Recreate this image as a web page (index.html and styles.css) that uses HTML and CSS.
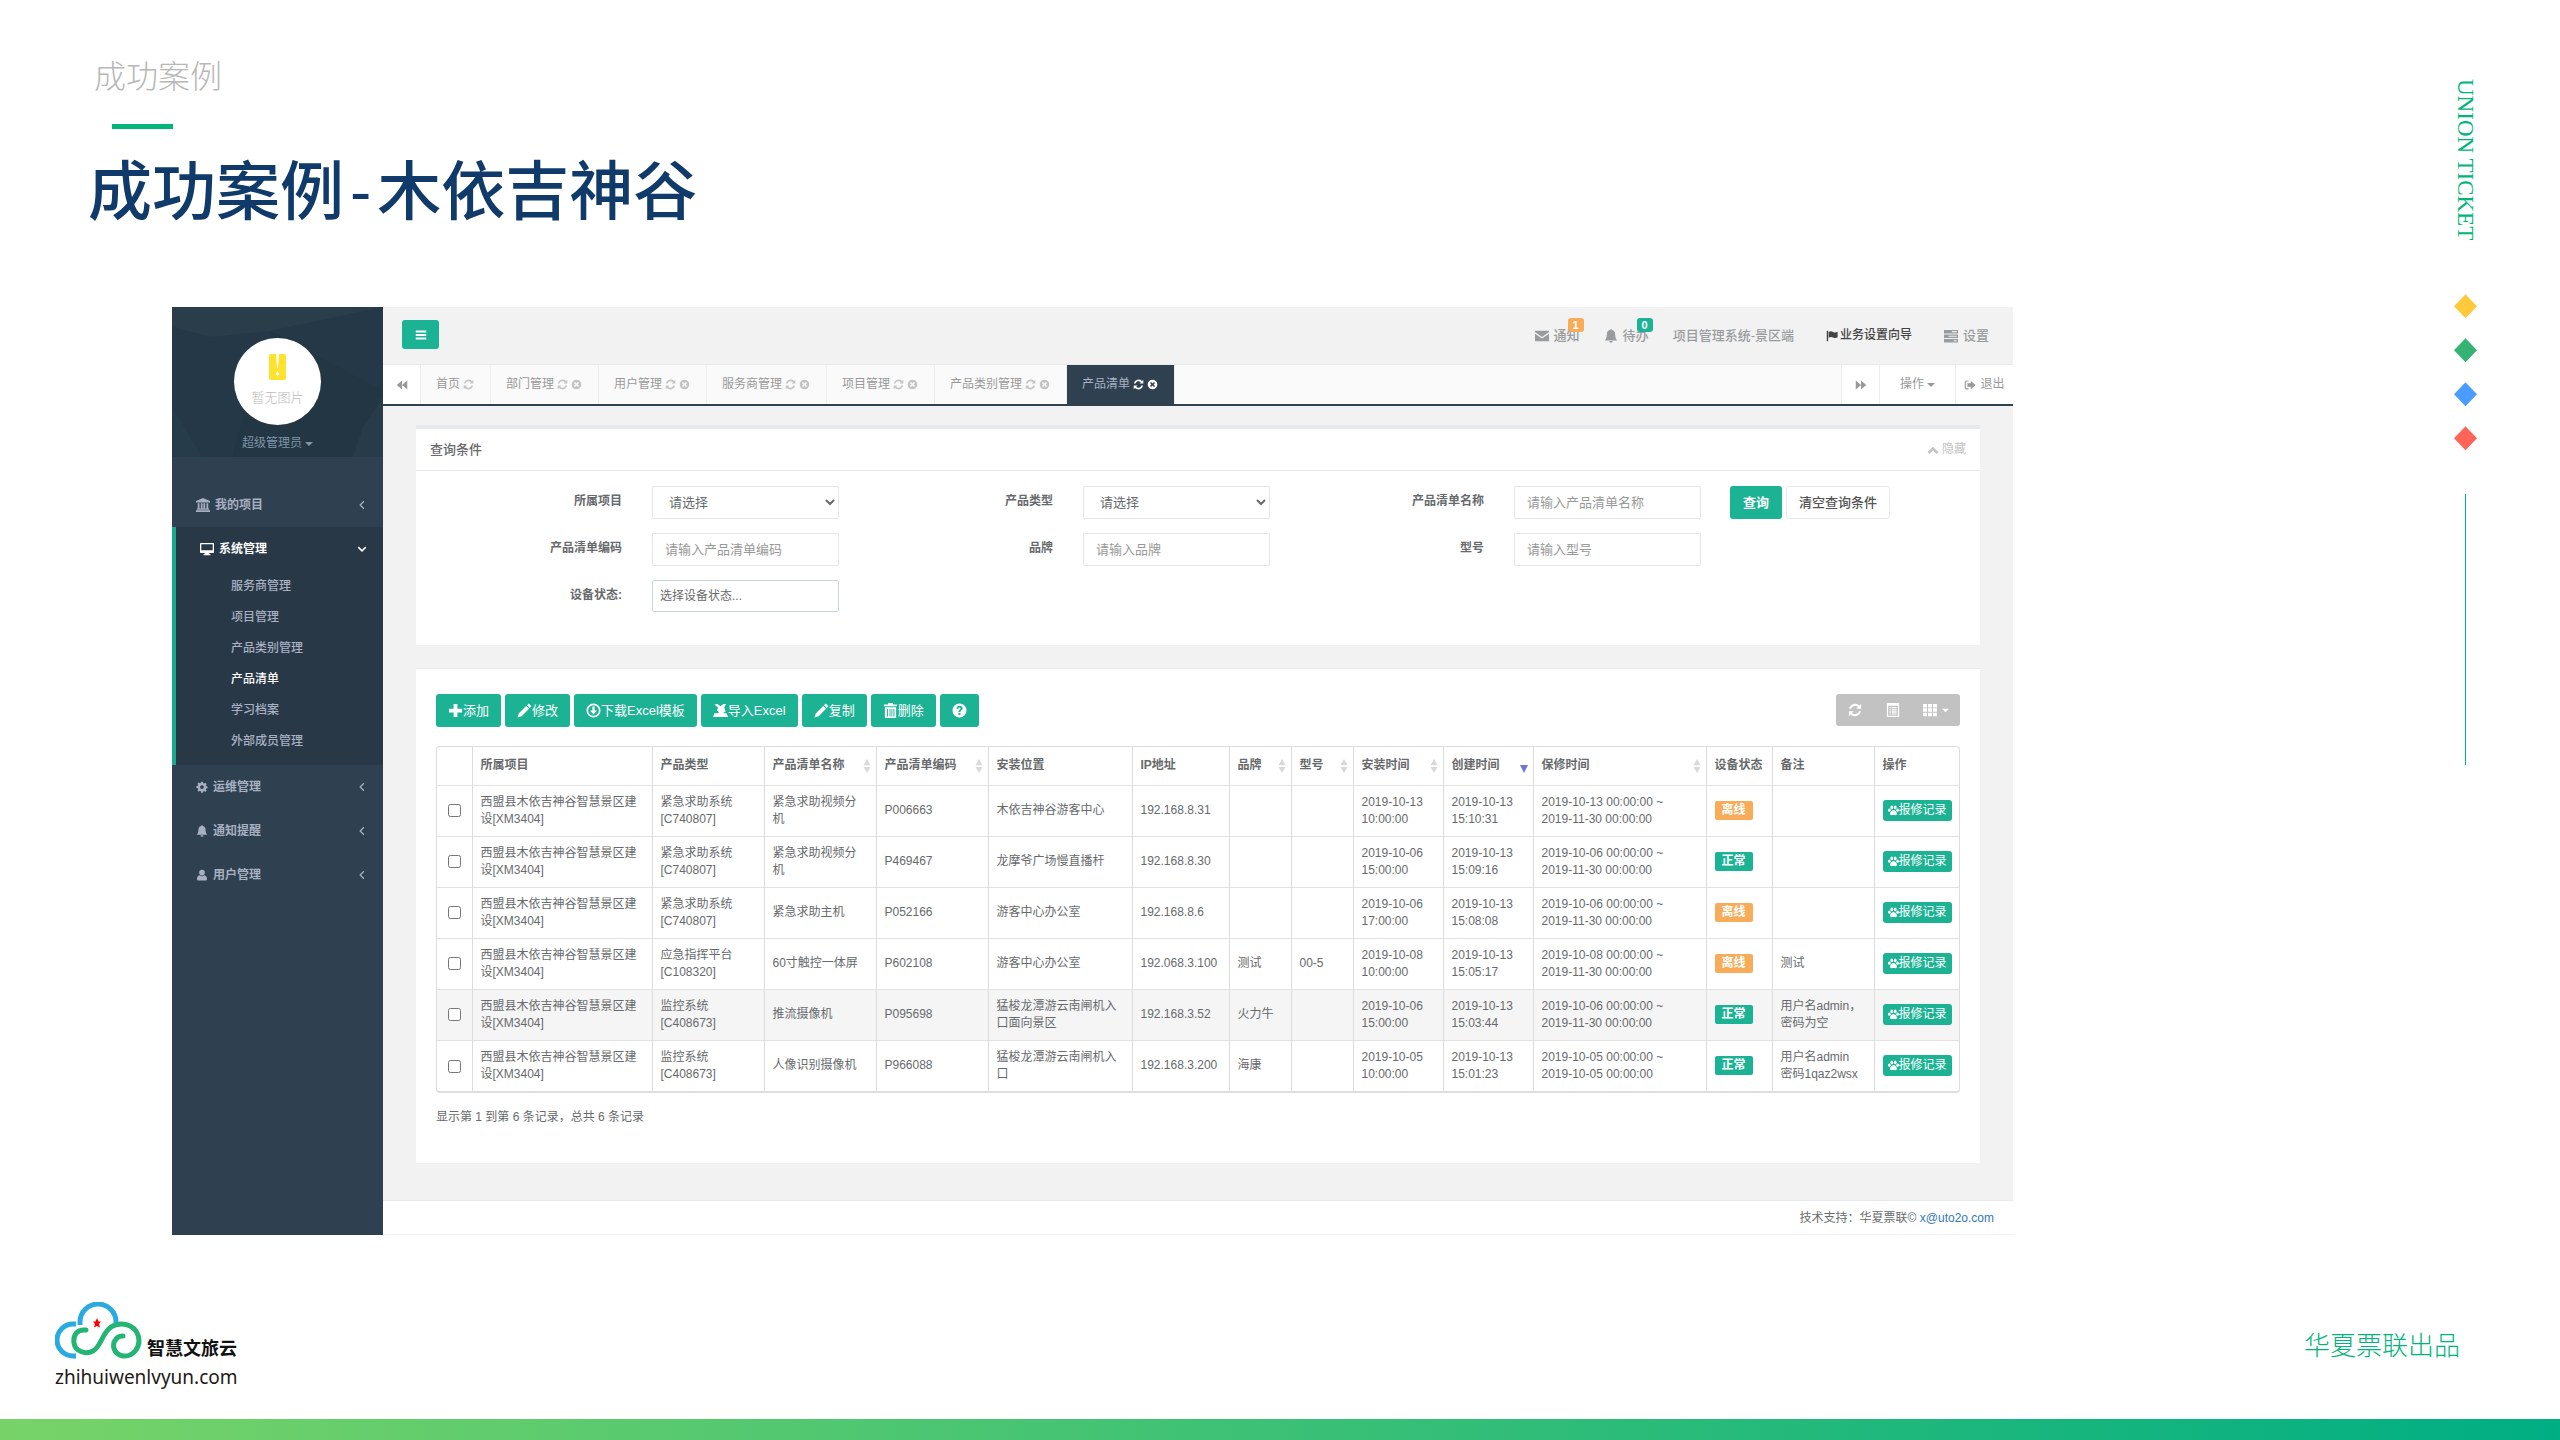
FILE: index.html
```html
<!DOCTYPE html>
<html lang="zh-CN">
<head>
<meta charset="utf-8">
<title>成功案例-木依吉神谷</title>
<link rel="stylesheet" href="styles.css">
</head>
<body>
<svg class="sprite" aria-hidden="true">
  <symbol id="bars" viewBox="0 0 16 16"><path d="M1 2h14v2.6H1zM1 6.7h14v2.6H1zM1 11.4h14V14H1z"/></symbol>
  <symbol id="backward" viewBox="0 0 16 16"><path d="M8 2v12L1 8zM15 2v12L8 8z"/></symbol>
  <symbol id="forward" viewBox="0 0 16 16"><path d="M8 2v12l7-6zM1 2v12l7-6z"/></symbol>
  <symbol id="refresh" viewBox="0 0 16 16"><path d="M15 1v5.6H9.4l2-2A4.8 4.8 0 0 0 3.600 6.500H1.200A7.100 7.100 0 0 1 13.100 2.900zM1 15V9.400h5.600l-2 2a4.800 4.800 0 0 0 7.800-1.900h2.400A7.100 7.100 0 0 1 2.900 13.100z"/></symbol>
  <symbol id="times" viewBox="0 0 16 16"><path fill-rule="evenodd" d="M8 1a7 7 0 1 1 0 14A7 7 0 0 1 8 1zM5.900 4.300L4.300 5.900 6.400 8l-2.100 2.100 1.600 1.600L8 9.600l2.100 2.100 1.600-1.600L9.600 8l2.100-2.100-1.600-1.600L8 6.400z"/></symbol>
  <symbol id="bank" viewBox="0 0 16 16"><path d="M8 0l8 3.500V5H0V3.500zM2 6h2v6h1.500V6h2v6h1V6h2v6H12V6h2v6h1v1.300H1V12h1zM0 14h16v2H0z"/></symbol>
  <symbol id="desktop" viewBox="0 0 16 16"><path fill-rule="evenodd" d="M1 1h14a1 1 0 0 1 1 1v9.500a1 1 0 0 1-1 1h-4.500l.5 1.500h1v1H4v-1h1l.5-1.500H1a1 1 0 0 1-1-1V2a1 1 0 0 1 1-1zm.5 1.500v7h13v-7z"/></symbol>
  <symbol id="cog" viewBox="0 0 16 16"><path fill-rule="evenodd" d="M6.800 1h2.400l.4 1.900 1.200.5 1.600-1.100 1.700 1.700L13 5.600l.5 1.200 1.900.4v2.400l-1.900.4-.5 1.200 1.100 1.600-1.700 1.700-1.600-1.100-1.200.5L9.200 15.500H6.800l-.4-1.900-1.200-.5-1.600 1.100-1.700-1.700L3 10.900l-.5-1.200L.6 9.200V6.800l1.900-.4L3 5.200 1.900 3.600l1.700-1.700L5.200 3l1.200-.5zM8 5.500a2.600 2.600 0 1 0 0 5.200 2.600 2.600 0 0 0 0-5.200z"/></symbol>
  <symbol id="bell" viewBox="0 0 16 16"><path d="M8 0c.7 0 1 .5 1 1.200 2.600.5 3.800 2.500 3.800 5 0 3.300.8 5 2.200 6.800H1c1.400-1.800 2.200-3.500 2.200-6.800 0-2.500 1.200-4.500 3.800-5C7 .5 7.300 0 8 0zM6 13.800h4a2 2 0 0 1-4 0z"/></symbol>
  <symbol id="user" viewBox="0 0 16 16"><path d="M8 1a3.700 3.700 0 1 1 0 7.600A3.700 3.700 0 0 1 8 1zM5 8.300a4.800 4.800 0 0 0 6 0c2.700.2 3.700 2.500 3.700 5 0 1.200-.8 2-2 2H3.300c-1.200 0-2-.8-2-2 0-2.500 1-4.800 3.700-5z"/></symbol>
  <symbol id="left" viewBox="0 0 16 16"><path d="M11 2L5 8l6 6" fill="none" stroke="currentColor" stroke-width="2"/></symbol>
  <symbol id="down" viewBox="0 0 16 16"><path d="M2 5l6 6 6-6" fill="none" stroke="currentColor" stroke-width="2.500"/></symbol>
  <symbol id="up" viewBox="0 0 16 16"><path d="M2 12l6-6 6 6" fill="none" stroke="currentColor" stroke-width="3.500"/></symbol>
  <symbol id="envelope" viewBox="0 0 16 16"><path d="M0 2h16v1.500L8 9 0 3.500zM0 5.500l8 5.300 8-5.300V14H0z"/></symbol>
  <symbol id="flag" viewBox="0 0 16 16"><path d="M1 1h1.800v14H1zM3.500 2.500c2-1.300 4-1.300 6 0s4 .8 6-.3v7.600c-2 1.200-4 1.400-6 .2s-4-.9-6 .3z"/></symbol>
  <symbol id="tasks" viewBox="0 0 16 16"><path fill-rule="evenodd" d="M0 1h16v4H0zM0 6.200h16v4H0zM0 11.400h16v4H0zM9 2.400v1.200h5.500V2.400zM5 7.600v1.200h9.500V7.600zM11 12.800V14h3.500v-1.200z"/></symbol>
  <symbol id="signout" viewBox="0 0 16 16"><path d="M6 2H3.500A2.500 2.500 0 0 0 1 4.500v7A2.500 2.500 0 0 0 3.500 14H6v-1.600H3.500a1 1 0 0 1-1-1v-7a1 1 0 0 1 1-1H6zM9 2.500L15.500 8 9 13.500v-3.300H4.500V5.800H9z"/></symbol>
  <symbol id="plus" viewBox="0 0 16 16"><path d="M6 1h4v5h5v4h-5v5H6v-5H1V6h5z"/></symbol>
  <symbol id="pencil" viewBox="0 0 16 16"><path d="M12.500.5l3 3-1.800 1.800-3-3zM9.800 3.200l3 3L5 14l-4.500 1.500L2 11z"/></symbol>
  <symbol id="download" viewBox="0 0 16 16"><path fill-rule="evenodd" d="M8 .5a7.500 7.500 0 1 1 0 15 7.500 7.500 0 0 1 0-15zm0 1.800a5.700 5.700 0 1 0 0 11.400A5.700 5.700 0 0 0 8 2.300zM6.800 3.800h2.400V8h2.600L8 12.300 4.200 8h2.600z"/></symbol>
  <symbol id="import" viewBox="0 0 16 16"><path d="M1.500 1.500L5 1l3 2.500L11 1h3l-2 3.500L13.500 9 11 10.500l1 .5h2.500L16 15H0l1.500-4H5l1.500-1L4 7.500l1.500-2.500z"/></symbol>
  <symbol id="trash" viewBox="0 0 16 16"><path fill-rule="evenodd" d="M5.500 0h5v1.500H15v2H1v-2h4.500zM2 4.500h12V16H2zm2.300 1.800v8h1v-8zm2.700 0v8h.9v-8zm2 0v8h.9v-8zm2.100 0v8h1v-8z"/></symbol>
  <symbol id="question" viewBox="0 0 16 16"><path fill-rule="evenodd" d="M8 .5a7.500 7.500 0 1 1 0 15 7.500 7.500 0 0 1 0-15zM4.800 6.200h2.100c0-1 .4-1.400 1.100-1.400s1.100.4 1.100 1c0 1.200-2.200 1.300-2.200 3.700h2c0-1.500 2.500-1.700 2.500-3.900C11.400 4 10 3 8 3S4.800 4.200 4.800 6.200zM6.900 10.600v2.200H9v-2.200z"/></symbol>
  <symbol id="list" viewBox="0 0 16 16"><path fill-rule="evenodd" d="M1 0h14v16H1zm1.500 3v11.500h11V3zM4 4.500h1.500V6H4zm2.500 0H12V6H6.500zM4 7h1.500v1.500H4zm2.500 0H12v1.500H6.500zM4 9.500h1.500V11H4zm2.500 0H12V11H6.500zM4 12h1.500v1.200H4zm2.500 0H12v1.200H6.500z"/></symbol>
  <symbol id="th" viewBox="0 0 16 16"><path d="M0 1h4.600v4H0zM5.700 1h4.600v4H5.700zM11.400 1H16v4h-4.600zM0 6h4.600v4H0zM5.700 6h4.600v4H5.700zM11.400 6H16v4h-4.600zM0 11h4.600v4H0zM5.700 11h4.600v4H5.700zM11.400 11H16v4h-4.600z"/></symbol>
  <symbol id="paw" viewBox="0 0 16 16"><ellipse cx="5.500" cy="3.600" rx="2" ry="2.700"/><ellipse cx="10.500" cy="3.600" rx="2" ry="2.700"/><ellipse cx="2" cy="7.500" rx="1.900" ry="2.400"/><ellipse cx="14" cy="7.500" rx="1.900" ry="2.400"/><path d="M8 7.300c2.700 0 5 3.400 5 5.600 0 2.700-3 1.700-5 1.700s-5 1-5-1.700c0-2.200 2.300-5.600 5-5.600z"/></symbol>
  <symbol id="caret" viewBox="0 0 16 16"><path d="M0 4h16l-8 8z"/></symbol>
  <symbol id="sort" viewBox="0 0 8 16"><path d="M4 0l4 7H0zM4 16l4-7H0z"/></symbol>
  <symbol id="desc" viewBox="0 0 8 8"><path d="M0 0h8L4 8z"/></symbol>
</svg>

<div class="slide">
  <div class="stage">
    <header class="heading">
      <p class="eyebrow">成功案例</p>
      <span class="dash"></span>
      <h1>成功案例<span class="hyphen">-</span>木依吉神谷</h1>
    </header>

    <div class="app">
      <aside class="sidebar">
        <div class="profile">
          <svg class="facets" viewBox="0 0 211 150" preserveAspectRatio="none" aria-hidden="true">
            <path fill="#293d4b" d="M0 0h211L98 24 40 30 0 20z"/><path fill="#22343f" fill-opacity=".5" d="M98 24l113 60v66H60z"/><path fill="#2a404f" fill-opacity=".6" d="M211 90v60h-30l10-30z"/><path fill="#27404f" fill-opacity=".5" d="M0 100l30 50H0z"/>
          </svg>
          <div class="avatar">
            <svg class="avatar-mark" viewBox="0 0 17 26" aria-hidden="true"><rect width="17" height="26" rx="2" fill="#ffe22e"/><path d="M7 0h3l-1 14H8z" fill="#fff"/><path d="M8.500 17l1.700 3-1.700 2.500L6.800 20z" fill="#fff"/></svg>
            <span>暂无图片</span>
          </div>
          <button class="profile-name" type="button">超级管理员<svg class="ic caret"><use href="#caret"/></svg></button>
        </div>
        <nav class="menu">
          <a class="item" href="#"><svg class="ic wide"><use href="#bank"/></svg>我的项目<svg class="ic chev"><use href="#left"/></svg></a>
          <div class="group">
            <a class="item on" href="#"><svg class="ic wide"><use href="#desktop"/></svg>系统管理<svg class="ic chev"><use href="#down"/></svg></a>
            <a class="sub" href="#">服务商管理</a>
            <a class="sub" href="#">项目管理</a>
            <a class="sub" href="#">产品类别管理</a>
            <a class="sub on" href="#">产品清单</a>
            <a class="sub" href="#">学习档案</a>
            <a class="sub" href="#">外部成员管理</a>
          </div>
          <a class="item" href="#"><svg class="ic"><use href="#cog"/></svg>运维管理<svg class="ic chev"><use href="#left"/></svg></a>
          <a class="item" href="#"><svg class="ic"><use href="#bell"/></svg>通知提醒<svg class="ic chev"><use href="#left"/></svg></a>
          <a class="item" href="#"><svg class="ic"><use href="#user"/></svg>用户管理<svg class="ic chev"><use href="#left"/></svg></a>
        </nav>
      </aside>

      <div class="page">
        <div class="topbar">
          <button class="toggle" type="button" aria-label="菜单"><svg class="ic"><use href="#bars"/></svg></button>
          <div class="links">
            <a class="badged" href="#"><svg class="ic wide"><use href="#envelope"/></svg>通知<b class="count warn">1</b></a>
            <a class="badged" href="#"><svg class="ic wide"><use href="#bell"/></svg>待办<b class="count">0</b></a>
            <a class="system" href="#">项目管理系统-景区端</a>
            <a class="guide" href="#"><svg class="ic"><use href="#flag"/></svg>业务设置向导</a>
            <a href="#"><svg class="ic wide"><use href="#tasks"/></svg>设置</a>
          </div>
        </div>

        <div class="tabs">
          <button class="edge" type="button" aria-label="向左"><svg class="ic"><use href="#backward"/></svg></button>
          <a class="tab" href="#">首页<svg class="ic"><use href="#refresh"/></svg></a>
          <a class="tab" href="#">部门管理<svg class="ic"><use href="#refresh"/></svg><svg class="ic"><use href="#times"/></svg></a>
          <a class="tab" href="#">用户管理<svg class="ic"><use href="#refresh"/></svg><svg class="ic"><use href="#times"/></svg></a>
          <a class="tab" href="#">服务商管理<svg class="ic"><use href="#refresh"/></svg><svg class="ic"><use href="#times"/></svg></a>
          <a class="tab" href="#">项目管理<svg class="ic"><use href="#refresh"/></svg><svg class="ic"><use href="#times"/></svg></a>
          <a class="tab" href="#">产品类别管理<svg class="ic"><use href="#refresh"/></svg><svg class="ic"><use href="#times"/></svg></a>
          <a class="tab on" href="#">产品清单<svg class="ic"><use href="#refresh"/></svg><svg class="ic"><use href="#times"/></svg></a>
          <button class="edge right" type="button" aria-label="向右"><svg class="ic"><use href="#forward"/></svg></button>
          <button class="edge ops" type="button">操作<svg class="ic caret"><use href="#caret"/></svg></button>
          <a class="edge exit" href="#"><svg class="ic"><use href="#signout"/></svg>退出</a>
        </div>

        <div class="content">
          <section class="panel filter">
            <div class="panel-head">
              <h2>查询条件</h2>
              <a class="hide" href="#"><svg class="ic"><use href="#up"/></svg>隐藏</a>
            </div>
            <form class="fields">
              <div class="field"><label for="f1">所属项目</label><select id="f1"><option>请选择</option></select></div>
              <div class="field"><label for="f2">产品类型</label><select id="f2"><option>请选择</option></select></div>
              <div class="field"><label for="f3">产品清单名称</label><input id="f3" type="text" placeholder="请输入产品清单名称"></div>
              <div class="actions"><button class="btn strong" type="button">查询</button><button class="btn plain" type="button">清空查询条件</button></div>
              <div class="field"><label for="f4">产品清单编码</label><input id="f4" type="text" placeholder="请输入产品清单编码"></div>
              <div class="field"><label for="f5">品牌</label><input id="f5" type="text" placeholder="请输入品牌"></div>
              <div class="field"><label for="f6">型号</label><input id="f6" type="text" placeholder="请输入型号"></div>
              <div class="field first"><label for="f7">设备状态:</label><input id="f7" class="chosen" type="text" placeholder="选择设备状态..."></div>
            </form>
          </section>

          <section class="panel list">
            <div class="toolbar">
              <button class="btn" type="button"><svg class="ic"><use href="#plus"/></svg>添加</button>
              <button class="btn" type="button"><svg class="ic"><use href="#pencil"/></svg>修改</button>
              <button class="btn" type="button"><svg class="ic"><use href="#download"/></svg>下载Excel模板</button>
              <button class="btn" type="button"><svg class="ic"><use href="#import"/></svg>导入Excel</button>
              <button class="btn" type="button"><svg class="ic"><use href="#pencil"/></svg>复制</button>
              <button class="btn" type="button"><svg class="ic"><use href="#trash"/></svg>删除</button>
              <button class="btn" type="button" aria-label="帮助"><svg class="ic"><use href="#question"/></svg></button>
              <div class="views">
                <button type="button" aria-label="刷新"><svg class="ic"><use href="#refresh"/></svg></button>
                <button type="button" aria-label="切换"><svg class="ic"><use href="#list"/></svg></button>
                <button type="button" aria-label="列"><svg class="ic"><use href="#th"/></svg><svg class="ic caret"><use href="#caret"/></svg></button>
              </div>
            </div>
            <div class="table-box">
            <table>
              <colgroup><col class="w35"><col class="w180"><col class="w112"><col class="w112"><col class="w112"><col class="w144"><col class="w97"><col class="w62"><col class="w62"><col class="w90"><col class="w90"><col class="w173"><col class="w66"><col class="w102"><col class="w85"></colgroup>
              <thead><tr>
                <th></th><th>所属项目</th><th>产品类型</th>
                <th><span class="th">产品清单名称<svg class="sort"><use href="#sort"/></svg></span></th>
                <th><span class="th">产品清单编码<svg class="sort"><use href="#sort"/></svg></span></th>
                <th>安装位置</th><th>IP地址</th>
                <th><span class="th">品牌<svg class="sort"><use href="#sort"/></svg></span></th>
                <th><span class="th">型号<svg class="sort"><use href="#sort"/></svg></span></th>
                <th><span class="th">安装时间<svg class="sort"><use href="#sort"/></svg></span></th>
                <th><span class="th">创建时间<svg class="desc"><use href="#desc"/></svg></span></th>
                <th><span class="th">保修时间<svg class="sort"><use href="#sort"/></svg></span></th>
                <th>设备状态</th><th>备注</th><th>操作</th>
              </tr></thead>
              <tbody>
                <tr><td><input type="checkbox" aria-label="选择"></td><td>西盟县木依吉神谷智慧景区建设[XM3404]</td><td>紧急求助系统[C740807]</td><td>紧急求助视频分机</td><td>P006663</td><td>木依吉神谷游客中心</td><td>192.168.8.31</td><td></td><td></td><td>2019-10-13 10:00:00</td><td>2019-10-13 15:10:31</td><td>2019-10-13 00:00:00 ~<br>2019-11-30 00:00:00</td><td><span class="tag warn">离线</span></td><td></td><td><button class="mini" type="button"><svg class="ic"><use href="#paw"/></svg>报修记录</button></td></tr>
                <tr><td><input type="checkbox" aria-label="选择"></td><td>西盟县木依吉神谷智慧景区建设[XM3404]</td><td>紧急求助系统[C740807]</td><td>紧急求助视频分机</td><td>P469467</td><td>龙摩爷广场慢直播杆</td><td>192.168.8.30</td><td></td><td></td><td>2019-10-06 15:00:00</td><td>2019-10-13 15:09:16</td><td>2019-10-06 00:00:00 ~<br>2019-11-30 00:00:00</td><td><span class="tag">正常</span></td><td></td><td><button class="mini" type="button"><svg class="ic"><use href="#paw"/></svg>报修记录</button></td></tr>
                <tr><td><input type="checkbox" aria-label="选择"></td><td>西盟县木依吉神谷智慧景区建设[XM3404]</td><td>紧急求助系统[C740807]</td><td>紧急求助主机</td><td>P052166</td><td>游客中心办公室</td><td>192.168.8.6</td><td></td><td></td><td>2019-10-06 17:00:00</td><td>2019-10-13 15:08:08</td><td>2019-10-06 00:00:00 ~<br>2019-11-30 00:00:00</td><td><span class="tag warn">离线</span></td><td></td><td><button class="mini" type="button"><svg class="ic"><use href="#paw"/></svg>报修记录</button></td></tr>
                <tr><td><input type="checkbox" aria-label="选择"></td><td>西盟县木依吉神谷智慧景区建设[XM3404]</td><td>应急指挥平台[C108320]</td><td>60寸触控一体屏</td><td>P602108</td><td>游客中心办公室</td><td>192.068.3.100</td><td>测试</td><td>00-5</td><td>2019-10-08 10:00:00</td><td>2019-10-13 15:05:17</td><td>2019-10-08 00:00:00 ~<br>2019-11-30 00:00:00</td><td><span class="tag warn">离线</span></td><td>测试</td><td><button class="mini" type="button"><svg class="ic"><use href="#paw"/></svg>报修记录</button></td></tr>
                <tr class="hover"><td><input type="checkbox" aria-label="选择"></td><td>西盟县木依吉神谷智慧景区建设[XM3404]</td><td>监控系统<br>[C408673]</td><td>推流摄像机</td><td>P095698</td><td>猛梭龙潭游云南闸机入口面向景区</td><td>192.168.3.52</td><td>火力牛</td><td></td><td>2019-10-06 15:00:00</td><td>2019-10-13 15:03:44</td><td>2019-10-06 00:00:00 ~<br>2019-11-30 00:00:00</td><td><span class="tag">正常</span></td><td>用户名admin，密码为空</td><td><button class="mini" type="button"><svg class="ic"><use href="#paw"/></svg>报修记录</button></td></tr>
                <tr><td><input type="checkbox" aria-label="选择"></td><td>西盟县木依吉神谷智慧景区建设[XM3404]</td><td>监控系统<br>[C408673]</td><td>人像识别摄像机</td><td>P966088</td><td>猛梭龙潭游云南闸机入口</td><td>192.168.3.200</td><td>海康</td><td></td><td>2019-10-05 10:00:00</td><td>2019-10-13 15:01:23</td><td>2019-10-05 00:00:00 ~<br>2019-10-05 00:00:00</td><td><span class="tag">正常</span></td><td>用户名admin<br>密码1qaz2wsx</td><td><button class="mini" type="button"><svg class="ic"><use href="#paw"/></svg>报修记录</button></td></tr>
              </tbody>
            </table>
            </div>
            <p class="summary">显示第 1 到第 6 条记录，总共 6 条记录</p>
          </section>
        </div>

        <footer class="support">技术支持：华夏票联© <a href="#">x@uto2o.com</a></footer>
      </div>
    </div>
  </div>

  <aside class="rail">
    <p>UNION TICKET</p>
    <div class="gems"><i class="gem yellow"></i><i class="gem green"></i><i class="gem blue"></i><i class="gem red"></i></div>
    <span class="rule"></span>
  </aside>
</div>

<footer class="base">
  <div class="brand">
    <div class="brand-row">
      <svg class="cloud" viewBox="0 0 87 57" aria-hidden="true">
        <g fill="none" stroke-width="5">
          <path stroke="#29abe2" d="M21 22H18A16 16 0 0 0 18 54H21M25 23V20A18 18 0 0 1 61 20V22"/>
          <path stroke="#22b573" stroke-linecap="round" d="M31 28C22 27 18 33 19 41C20 49 30 53 38 49C46 45 47 31 56 25C65 19 79 22 83 33C87 46 77 55 68 54C58 52 56 42 62 36C64 34 67 34 68 34"/>
        </g>
        <path fill="#f00" d="M42 16l1.500 3.500H46l-2 2.500 1 3.500-3-1.500-3 1.500 1-3.500-2-2.500h2.500z"/>
      </svg>
      <strong>智慧文旅云</strong>
    </div>
    <span class="domain">zhihuiwenlvyun.com</span>
  </div>
  <p class="credit">华夏票联出品</p>
</footer>
<div class="stripe"></div>
</body>
</html>
```

FILE: styles.css
```css
* { box-sizing: border-box; }

body {
  margin: 0;
  min-height: 100vh;
  display: flex;
  flex-direction: column;
  background: #fff;
  color: #676a6c;
  font-family: "Liberation Sans", "Noto Sans CJK SC", sans-serif;
  font-size: 12px;
  line-height: 17px;
}

p, h1, h2 { margin: 0; font-weight: 400; }
a { color: inherit; text-decoration: none; }
button, input, select { font: inherit; color: inherit; margin: 0; }
button { border: 0; padding: 0; background: none; }

.sprite { position: absolute; width: 0; height: 0; }
.ic { width: 12px; height: 12px; fill: currentColor; color: inherit; flex: none; }
.ic.wide { width: 14px; height: 14px; }
.ic.caret { width: 8px; height: 8px; }

/* Slide frame */
.slide { flex: 1; display: flex; }
.stage { flex: 1; min-width: 0; padding-left: 172px; }
.heading { margin-left: -84px; height: 307px; padding-top: 53px; display: flex; flex-direction: column; align-items: flex-start; }
.eyebrow { margin-left: 6px; font-size: 32px; line-height: 48px; font-weight: 300; color: #b8b8b8; }
.dash { width: 61px; height: 5px; margin: 23px 0 0 24px; background: #00b578; }
.heading h1 { margin-top: 17px; font-size: 64px; line-height: 92px; font-weight: 500; color: #0f3a69; }
.hyphen { padding: 0 6px; }

.rail { width: 547px; padding: 79px 83px 0 0; display: flex; flex-direction: column; align-items: flex-end; }
.rail p { writing-mode: vertical-rl; width: 24px; font-family: "Liberation Serif", serif; font-size: 23px; line-height: 24px; color: #00b578; }
.gems { margin-top: 54px; display: flex; flex-direction: column; gap: 20px; }
.gem { width: 23px; height: 24px; clip-path: polygon(50% 0, 100% 50%, 50% 100%, 0 50%); }
.yellow { background: #ffc93c; }
.green { background: #35b373; }
.blue { background: #4a9dff; }
.red { background: #ff6459; }
.rule { width: 1px; height: 271px; margin: 44px 11px 0 0; background: #00b578; }

/* Application window */
.app { display: flex; min-height: 928px; background: #f2f2f2; }

.sidebar { width: 211px; flex: none; background: #2f4050; color: #a7b1c2; }
.profile { position: relative; height: 150px; padding-top: 31px; display: flex; flex-direction: column; align-items: center; background: #253847; overflow: hidden; }
.facets { position: absolute; inset: 0; width: 100%; height: 100%; }
.avatar { position: relative; width: 87px; height: 87px; border-radius: 50%; background: #fff; color: #bbb; font-size: 13px; line-height: 18px; font-weight: 300; display: flex; flex-direction: column; align-items: center; padding-top: 16px; gap: 9px; }
.avatar-mark { width: 17px; height: 26px; }
.profile-name { position: relative; margin-top: 10px; color: #8095a8; line-height: 17px; display: flex; align-items: center; gap: 3px; }

.menu { padding-top: 26px; }
.item { height: 44px; padding: 0 16px 0 24px; display: flex; align-items: center; gap: 5px; font-weight: 700; }
.chev { width: 10px; height: 10px; margin-left: auto; }
.group { border-left: 4px solid #19aa8d; background: #293846; padding-bottom: 8px; }
.item.on, .sub.on { color: #fff; }
.sub { display: block; line-height: 31px; padding-left: 55px; font-weight: 500; }

.page { flex: 1; min-width: 0; display: flex; flex-direction: column; }
.topbar { height: 58px; border-bottom: 1px solid #e7eaec; padding: 0 24px 0 19px; display: flex; align-items: center; justify-content: space-between; }
.toggle { width: 37px; height: 29px; margin-bottom: 2px; border-radius: 3px; background: #1cb394; color: #fff; display: grid; place-items: center; }
.links { display: flex; align-items: center; color: #999c9e; font-size: 13px; font-weight: 500; }
.links a { display: flex; align-items: center; gap: 5px; margin-left: 32px; }
.links .badged { position: relative; margin-left: 24px; }
.links .system { margin-left: 24px; }
.links .guide { color: #444; font-size: 12px; gap: 2px; }
.count { position: absolute; right: -4px; top: -9px; min-width: 16px; height: 14px; border-radius: 3px; background: #1cb394; color: #fff; font-size: 11px; line-height: 14px; text-align: center; }
.count.warn, .tag.warn { background: #f8ac59; }

.tabs { height: 41px; display: flex; background: #fafafa; border-bottom: 2px solid #2f4050; color: #999; }
.tab { display: flex; align-items: center; gap: 3px; padding: 0 16px 0 15px; border-right: 1px solid #eee; }
.tab .ic { width: 11px; height: 11px; color: #c4c4c4; }
.tab.on { background: #2f4050; color: #a7b1c2; }
.tab.on .ic { color: #fff; }
.edge { background: #fff; width: 38px; border-right: 1px solid #eee; display: flex; align-items: center; justify-content: center; gap: 3px; }
.edge.right { margin-left: auto; width: 39px; border-left: 1px solid #eee; }
.edge.ops { width: 76px; }
.edge.exit { width: 57px; border: 0; gap: 4px; }

.content { flex: 1; padding: 19px 33px 37px; }
.panel { background: #fff; }
.filter { border-top: 4px solid #e7eaec; padding-bottom: 33px; margin-bottom: 23px; }
.panel-head { height: 42px; padding: 0 14px; border-bottom: 1px solid #e7eaec; display: flex; align-items: center; justify-content: space-between; }
.panel-head h2 { font-size: 13px; font-weight: 500; }
.hide { display: flex; align-items: center; gap: 3px; color: #c4c4c4; }
.fields { padding-top: 15px; display: grid; grid-template-columns: 431fr 431fr 431fr 271fr; row-gap: 14px; }
.field { display: grid; grid-template-columns: 206fr 187fr; column-gap: 30px; padding-right: 8px; }
.field.first { grid-column: 1; }
.field label { text-align: right; line-height: 30px; font-weight: 700; }
.field input, .field select { width: 100%; min-width: 0; height: 33px; border: 1px solid #e5e6e7; border-radius: 1px; background: #fff; font-size: 13px; padding: 0 12px; }
.field select { padding: 0 2px 0 12px; }
.field input::placeholder { color: #999; opacity: 1; }
.field .chosen { height: 32px; border-color: #cbd5dd; border-radius: 2px; font-size: 12px; padding: 0 7px; }
.field .chosen::placeholder { color: #676a6c; }
.actions { display: flex; gap: 4px; padding-left: 21px; }

.btn { height: 33px; padding: 0 12px; border-radius: 3px; background: #1cb394; color: #fff; font-size: 13px; display: flex; align-items: center; }
.btn .ic { width: 15px; height: 15px; }
.btn.strong { font-weight: 700; padding: 0 13px; }
.btn.plain { background: #fff; border: 1px solid #e7eaec; color: #555; font-weight: 500; }

.list { border-top: 1px solid #e7eaec; padding: 25px 20px 37px; }
.toolbar { display: flex; gap: 4px; margin-bottom: 19px; }
.views { margin-left: auto; display: flex; height: 32px; border-radius: 3px; background: #c2c2c2; color: #fff; }
.views button { width: 38px; display: flex; align-items: center; justify-content: center; gap: 5px; }
.views button:last-child { width: 48px; }
.views .ic { width: 14px; height: 14px; }
.views .caret { width: 7px; height: 7px; }

.table-box { border: 1px solid #ddd; border-bottom-width: 2px; border-radius: 4px; }
table { width: 100%; table-layout: fixed; border-collapse: collapse; }
.w35 { width: 35px; } .w180 { width: 180px; } .w112 { width: 112px; } .w144 { width: 144px; }
.w97 { width: 97px; } .w62 { width: 62px; } .w90 { width: 90px; } .w173 { width: 173px; }
.w66 { width: 66px; } .w102 { width: 102px; } .w85 { width: 85px; }
th, td { padding: 8px; border-left: 1px solid #ddd; text-align: left; vertical-align: middle; }
th:first-child, td:first-child { border-left: 0; }
td { height: 51px; border-top: 1px solid #e2e2e2; }
th { height: 38px; padding: 0 0 0 8px; font-weight: 700; white-space: nowrap; }
td:nth-child(4) { padding-right: 12px; }
td:nth-child(13), td:nth-child(15), td:nth-child(7) { padding-right: 0; }
td:first-child { padding: 0; text-align: center; }
td input { width: 13px; height: 13px; vertical-align: middle; }
.hover { background: #f5f5f5; }
.th { display: flex; align-items: center; justify-content: space-between; padding-right: 5px; }
.sort { width: 8px; height: 14px; fill: #d9d9d9; }
.desc { width: 8px; height: 8px; margin-top: 7px; fill: #7373dd; }
.tag { display: inline-block; width: 38px; line-height: 19px; border-radius: 2px; background: #1cb394; color: #fff; font-weight: 700; text-align: center; vertical-align: middle; }
.mini { display: flex; align-items: center; height: 21px; padding: 0 5px; border-radius: 3px; background: #1cb394; color: #fff; white-space: nowrap; }
.mini .ic { width: 11px; height: 11px; }
.summary { margin-top: 16px; }

.support { height: 35px; padding: 0 19px; border-top: 1px solid #e7eaec; border-bottom: 1px solid #f2f2f2; background: #fff; line-height: 34px; text-align: right; }
.support a { color: #337ab7; }

/* Slide footer */
.base { display: flex; justify-content: space-between; align-items: flex-start; padding: 0 100px 27px 55px; }
.brand { color: #231815; }
.brand-row { display: flex; align-items: flex-end; gap: 5px; }
.cloud { width: 87px; height: 57px; }
.brand strong { font-size: 18px; line-height: 20px; color: #111; }
.domain { display: block; margin-top: 3px; font-family: "Noto Sans", sans-serif; font-size: 19px; line-height: 30px; }
.credit { margin-top: 25px; font-size: 26px; line-height: 38px; font-weight: 300; color: #00b578; }
.stripe { height: 21px; background: linear-gradient(90deg, #77d368, #00ae83); }
```
